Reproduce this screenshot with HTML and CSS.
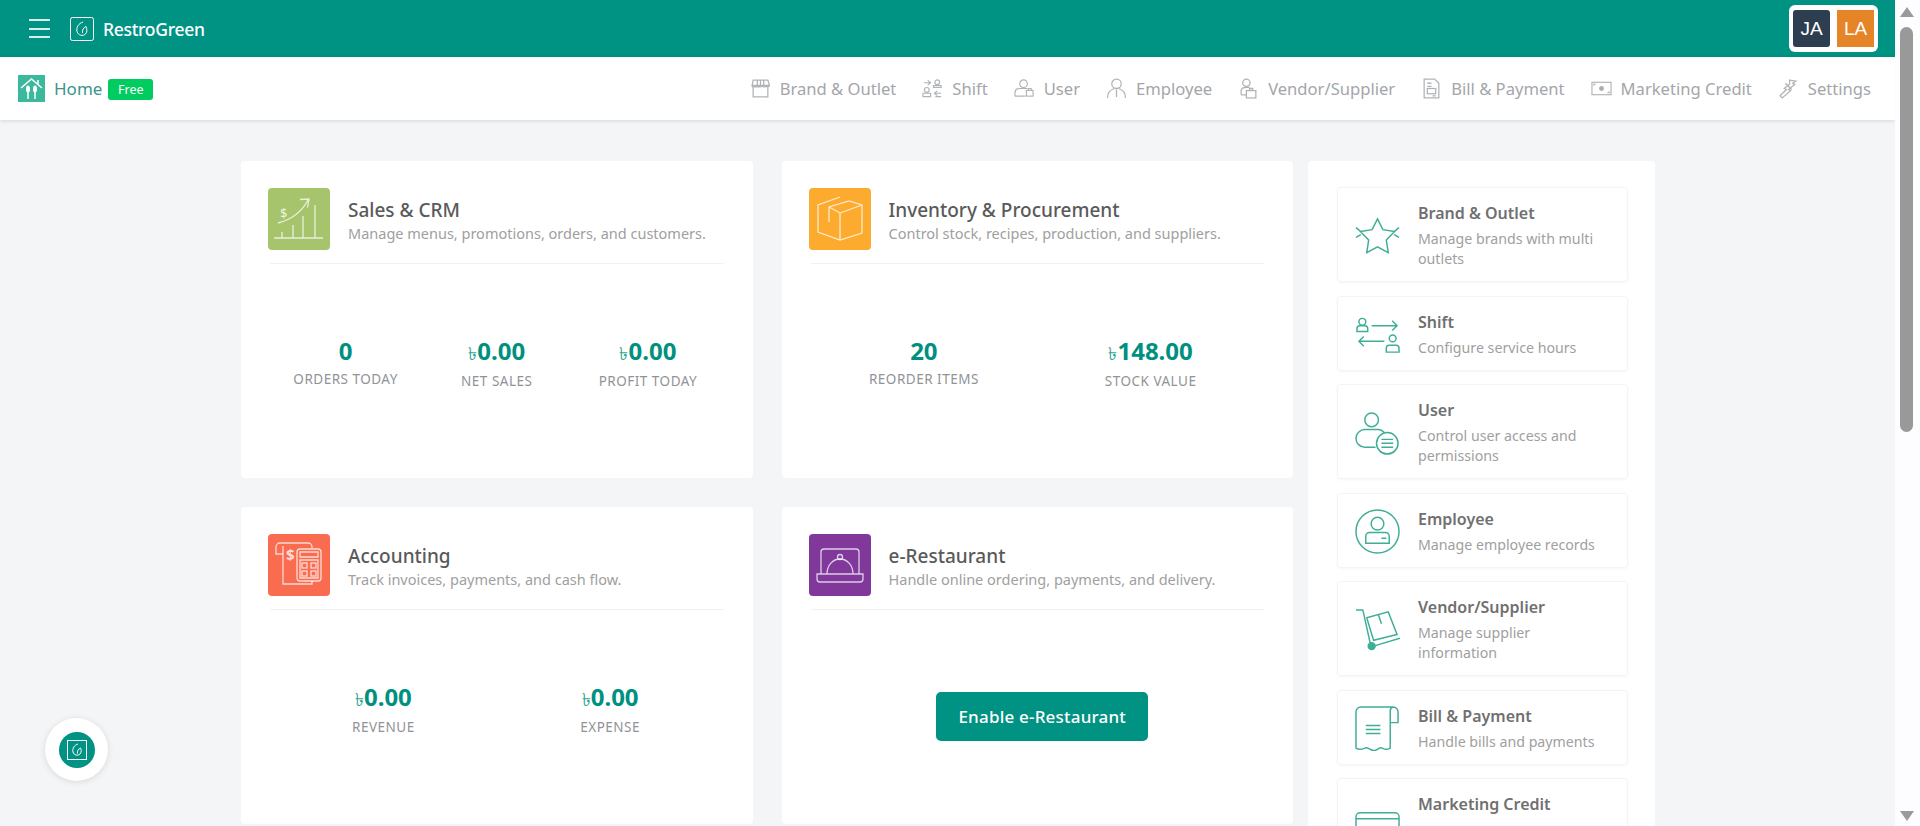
FILE: index.html
```html
<!DOCTYPE html>
<html lang="en">
<head>
    <meta charset="UTF-8">
    <title>RestroGreen</title>
    <link rel="stylesheet" href="styles.css">
</head>
<body>
<div class="app">
    <div class="page">
        <!-- top bar -->
        <header class="topbar">
            <div class="burger"><span></span><span></span><span></span></div>
            <svg class="logo" viewBox="0 0 24 24" fill="none" stroke="#fff"><rect x=".5" y=".5" width="23" height="23" rx="2"/><path d="M13 5C8.500 6.500 6 10.500 7 14.500c1 4 6 5 8.500 2.500 2-2 1.500-5 .5-7.500-2.500 1-4 3.500-3.500 6.500"/></svg>
            <span class="brand">RestroGreen</span>
            <div class="avatars">
                <span class="avatar avatar-dark">JA</span>
                <span class="avatar avatar-orange">LA</span>
            </div>
        </header>

        <!-- second bar -->
        <nav class="subnav">
            <svg class="home-icon" viewBox="0 0 27 27"><rect width="27" height="27" fill="#3cb89c"/><path d="M3 13 13.500 4 24 13M20 5v4" fill="none" stroke="#fff" stroke-width="1.500"/><path d="M10 12v12M17 12v12" stroke="#fff" stroke-width="1.500"/><ellipse cx="10" cy="14" rx="2" ry="3.500" fill="#fff"/><ellipse cx="17" cy="14" rx="2" ry="3.500" fill="#fff"/></svg>
            <span class="home-label">Home</span>
            <span class="badge">Free</span>
            <div class="subnav-links">
                <a class="subnav-link"><svg viewBox="0 0 20 20"><path d="M3 2h14l1.500 5c0 2-3 2-3 0 0 2-4 2-4 0 0 2-3 2-3 0 0 2-3.500 2-3.500 0 0 2-3.500 2-3 0zM3 9v9h14V9M1.500 7h17M7 2v5M10 2v5M13 2v5"/></svg>Brand &amp; Outlet</a>
                <a class="subnav-link"><svg viewBox="0 0 22 20"><circle cx="16" cy="3.500" r="2.500"/><path d="M12 9V7h8v2zM2 4h7M6 1.500 9 4 6 6.500"/><circle cx="5" cy="11.500" r="2.500"/><path d="M1 18.500V15h8v3.500zM13 15h7M16 12.500 13 15l3 2.500M20 18.500h-6"/></svg>Shift</a>
                <a class="subnav-link"><svg viewBox="0 0 22 20"><circle cx="10" cy="5" r="4"/><path d="M1 18v-3c0-3 2-5 5-5h8M1 18h11"/><rect x="13" y="12" width="7" height="6"/><path d="M15 12v-2h3v2"/></svg>User</a>
                <a class="subnav-link"><svg viewBox="0 0 20 20"><circle cx="10" cy="5.500" r="4.500"/><path d="M1.500 19c0-5 3-8 6.500-9M18.500 19c0-5-3-8-6.500-9M10 11v7"/></svg>Employee</a>
                <a class="subnav-link"><svg viewBox="0 0 20 20"><circle cx="8" cy="4.500" r="3.500"/><path d="M3 16v-4c0-2 2-3 5-3h3"/><rect x="8" y="12" width="9" height="7"/><path d="M11 12v-2h3v2M3 16h5"/></svg>Vendor/Supplier</a>
                <a class="subnav-link"><svg viewBox="0 0 18 20"><path d="M2 1h10l4 4v14H2zM5 5h4M5 8h4"/><rect x="5" y="10" width="8" height="5"/><path d="M10 17h3"/></svg>Bill &amp; Payment</a>
                <a class="subnav-link"><svg viewBox="0 0 22 16"><rect x="1" y="1.500" width="20" height="13"/><circle cx="11" cy="8" r="2" fill="#a6a9ad"/><path d="M3 5V3.500h2M19 11v1.500h-2"/></svg>Marketing Credit</a>
                <a class="subnav-link"><svg viewBox="0 0 20 20"><path d="M11 2l6 1-3 2 2 1-6 5 2 1-8 7-2-2 6-6-2-1 5-4z"/><path d="M7 5l6 6"/></svg>Settings</a>
            </div>
        </nav>

        <main class="content">
            <div class="modules">
                <section class="card">
                    <div class="card-head">
                        <span class="card-icon bg-green">
                            <svg viewBox="0 0 62 62"><path d="M10 35c12-3 23-10 30-23M32 11.500l9-.5-1.500 8.500M6 50h49M14 50v-6M25 50V37M35 50V28M47 50V17"/><text x="12" y="30" class="icon-text">$</text></svg>
                        </span>
                        <div class="card-text">
                            <h2>Sales &amp; CRM</h2>
                            <p>Manage menus, promotions, orders, and customers.</p>
                        </div>
                    </div>
                    <div class="stats">
                        <div class="stat"><strong>0</strong><span>ORDERS TODAY</span></div>
                        <div class="stat"><strong><i>৳</i>0.00</strong><span>NET SALES</span></div>
                        <div class="stat"><strong><i>৳</i>0.00</strong><span>PROFIT TODAY</span></div>
                    </div>
                </section>

                <section class="card">
                    <div class="card-head">
                        <span class="card-icon bg-orange">
                            <svg viewBox="0 0 62 62"><path d="M31 9 9 17v27l22 8 22-7V17l-13-4-20 6v15M31 25v27M31 25l22-8M31 25l-11-6"/></svg>
                        </span>
                        <div class="card-text">
                            <h2>Inventory &amp; Procurement</h2>
                            <p>Control stock, recipes, production, and suppliers.</p>
                        </div>
                    </div>
                    <div class="stats">
                        <div class="stat"><strong>20</strong><span>REORDER ITEMS</span></div>
                        <div class="stat"><strong><i>৳</i>148.00</strong><span>STOCK VALUE</span></div>
                    </div>
                </section>

                <section class="card">
                    <div class="card-head">
                        <span class="card-icon bg-red">
                            <svg viewBox="0 0 62 62"><path d="M44 14v-1a4 4 0 0 0-4-4H12a4 4 0 0 0-4 4v7h7v30h29v-3M15 20v-8"/><rect x="29" y="15" width="24" height="32" rx="3"/><path d="M32 23h18v-5H32zM32 44V26h18v18z"/><rect x="34" y="29" width="5" height="5"/><rect x="43" y="29" width="5" height="5"/><rect x="34" y="37" width="5" height="5"/><rect x="43" y="37" width="5" height="5"/><text x="18" y="26" class="icon-text icon-bold">$</text></svg>
                        </span>
                        <div class="card-text">
                            <h2>Accounting</h2>
                            <p>Track invoices, payments, and cash flow.</p>
                        </div>
                    </div>
                    <div class="stats">
                        <div class="stat"><strong><i>৳</i>0.00</strong><span>REVENUE</span></div>
                        <div class="stat"><strong><i>৳</i>0.00</strong><span>EXPENSE</span></div>
                    </div>
                </section>

                <section class="card">
                    <div class="card-head">
                        <span class="card-icon bg-purple">
                            <svg viewBox="0 0 62 62"><path d="M12 40V18a3 3 0 0 1 3-3h32a3 3 0 0 1 3 3v22M8 40v5a3 3 0 0 0 3 3h40a3 3 0 0 0 3-3v-5zM18 40c0-9 6-15 13-15s13 6 13 15"/><circle cx="31" cy="23" r="2.500"/></svg>
                        </span>
                        <div class="card-text">
                            <h2>e-Restaurant</h2>
                            <p>Handle online ordering, payments, and delivery.</p>
                        </div>
                    </div>
                    <div class="card-action">
                        <button class="enable-btn">Enable e-Restaurant</button>
                    </div>
                </section>
            </div>

            <aside class="side-panel">
                <a class="side-item">
                    <svg viewBox="0 0 46 40"><path d="M23 2l5.500 11 12 2-8.500 8.500 2 13-11-6-11 6 2-13L5.500 15l12-2zM1 11l5 4M45 11l-5 4M1 21l5-3M45 21l-5-3"/></svg>
                    <div><h3>Brand &amp; Outlet</h3><p>Manage brands with multi outlets</p></div>
                </a>
                <a class="side-item">
                    <svg viewBox="0 0 46 40"><circle cx="7.500" cy="7" r="3.500"/><path d="M2 17v-3a3 3 0 0 1 3-3h5a3 3 0 0 1 3 3v3zM17 11h26M38 6l5 5-5 5M30 27H4M9 22l-5 5 5 5"/><circle cx="38.500" cy="24" r="3.500"/><path d="M32 38v-4a3 3 0 0 1 3-3h7a3 3 0 0 1 3 3v4z"/></svg>
                    <div><h3>Shift</h3><p>Configure service hours</p></div>
                </a>
                <a class="side-item">
                    <svg viewBox="0 0 46 46"><circle cx="17" cy="9" r="7"/><path d="M21 37H10a9 9 0 0 1 0-18h14c3 0 5 2 6 3"/><circle cx="33" cy="33" r="11"/><path d="M27 29h12M27 33h12M27 37h12"/></svg>
                    <div><h3>User</h3><p>Control user access and permissions</p></div>
                </a>
                <a class="side-item">
                    <svg viewBox="0 0 46 46"><circle cx="23" cy="23" r="22"/><circle cx="23" cy="15" r="6.500"/><path d="M11 35v-7a4 4 0 0 1 4-4h16a4 4 0 0 1 4 4v7zM27 30h5"/></svg>
                    <div><h3>Employee</h3><p>Manage employee records</p></div>
                </a>
                <a class="side-item">
                    <svg viewBox="0 0 46 46"><path d="M1 2h7l8 36M46 31l-27 8"/><circle cx="17" cy="39" r="3.500" fill="#3fae97"/><path d="M12 10l22-6 9 23-24 6zM24 7l3 9"/></svg>
                    <div><h3>Vendor/Supplier</h3><p>Manage supplier information</p></div>
                </a>
                <a class="side-item">
                    <svg viewBox="0 0 46 46"><path d="M1 6a5 5 0 0 1 5-5h33a5 5 0 0 1 5 5v11h-8M39 1a4 4 0 0 0-3 4v38c-3 2-5 2-8 0-3-2-5 3-9 2.500s-6-4-9-2.500c-3 1.500-6 2-9 0V6M11 20h15M11 24h15M11 28h15"/></svg>
                    <div><h3>Bill &amp; Payment</h3><p>Handle bills and payments</p></div>
                </a>
                <a class="side-item side-item-cut">
                    <svg viewBox="0 0 46 46"><rect x="1" y="8" width="44" height="30" rx="4"/><path d="M1 14h44"/></svg>
                    <div><h3>Marketing Credit</h3></div>
                </a>
            </aside>
        </main>
    </div>

    <div class="scrollbar">
        <span class="arrow arrow-up"></span>
        <span class="thumb"></span>
        <span class="arrow arrow-down"></span>
    </div>

    <button class="float-btn">
        <span class="float-inner">
            <svg viewBox="0 0 20 20" fill="none" stroke="#fff"><rect x=".5" y=".5" width="19" height="19"/><path d="M11 4C7.500 5 5 8.500 6 12c1 3.500 5 4 7 2 1.500-1.500 1.500-4 .5-6-2 1-3.500 3-3 5.500"/></svg>
        </span>
    </button>
</div>
</body>
</html>
```
FILE: styles.css
```css
* {
    box-sizing: border-box;
}

html, body {
    height: 100%;
    margin: 0;
    overflow: hidden;
}

body {
    font-family: "Noto Sans", "Open Sans", sans-serif;
    background-color: #f4f5f7;
    color: #555;
}

.app {
    display: flex;
    height: 826px;
}

.page {
    flex: 1;
    min-width: 0;
    overflow: hidden;
}

/* top bar */
.topbar {
    height: 57px;
    background-color: #009282;
    display: flex;
    align-items: center;
    padding: 0 17px 0 29px;
    color: #fff;
}

.burger {
    width: 21px;
    display: flex;
    flex-direction: column;
    gap: 6.5px;
    margin-right: 20px;
}

.burger span {
    height: 2px;
    background-color: #d8f0ec;
}

.logo {
    width: 24px;
    height: 24px;
    margin-right: 9px;
}

.brand {
    font-size: 17.5px;
    font-weight: 500;
    letter-spacing: -0.3px;
}

.avatars {
    margin-left: auto;
    background-color: #fff;
    border-radius: 6px;
    padding: 5px 4px;
    display: flex;
    gap: 7px;
}

.avatar {
    width: 37px;
    height: 37px;
    display: flex;
    align-items: center;
    justify-content: center;
    font-family: "Liberation Sans", sans-serif;
    font-size: 19px;
}

.avatar-dark {
    background-color: #2c3e50;
    border-radius: 3px;
}

.avatar-orange {
    background-color: #e68428;
}

/* second bar */
.subnav {
    height: 63px;
    background-color: #fff;
    box-shadow: 0 1px 4px rgba(0, 0, 0, 0.12);
    display: flex;
    align-items: center;
    padding: 0 24px 0 18px;
    position: relative;
}

.home-icon {
    width: 27px;
    height: 27px;
    margin-right: 9px;
}

.home-label {
    font-size: 17px;
    color: #3d948a;
    margin-right: 5px;
}

.badge {
    width: 45px;
    height: 21px;
    margin: 2px 0 0 1px;
    background-color: #00cc5f;
    color: #fff;
    font-size: 12.5px;
    line-height: 21px;
    text-align: center;
    border-radius: 3px;
}

.subnav-links {
    margin-left: auto;
    display: flex;
    gap: 26px;
}

.subnav-link {
    display: flex;
    align-items: center;
    gap: 9px;
    font-size: 16.6px;
    color: #a3a6aa;
}

.subnav-link svg {
    width: 21px;
    height: 21px;
    fill: none;
    stroke: #b0b3b6;
    stroke-width: 1.2;
}

/* main */
.content {
    display: flex;
    align-items: flex-start;
    padding: 41px 0 0 241px;
    gap: 15px;
}

.modules {
    width: 1052px;
    display: grid;
    grid-template-columns: 511.5px 511.5px;
    column-gap: 29px;
    row-gap: 29px;
}

.card {
    background-color: #fff;
    border-radius: 4px;
    height: 317px;
    padding: 27px 29px 0;
}

.card-head {
    display: flex;
    align-items: center;
    gap: 18px;
    padding-bottom: 13px;
    border-bottom: 1px solid #f1f2f5;
}

.card-icon {
    width: 62px;
    height: 62px;
    margin-left: -2px;
    border-radius: 4px;
    flex-shrink: 0;
}

.card-icon svg {
    display: block;
    fill: none;
    stroke: rgba(255, 255, 255, 0.75);
    stroke-width: 1.3;
}

.icon-text {
    font-size: 13px;
    fill: rgba(255, 255, 255, 0.8);
    stroke: none;
}

.icon-bold {
    font-size: 15px;
    font-weight: 700;
}

.bg-green { background-color: #a5c46b; }
.bg-orange { background-color: #fdab2e; }
.bg-red { background-color: #f96c50; }
.bg-purple { background-color: #80399b; }

.card-text {
    padding-top: 4px;
}

.card h2 {
    margin: 0;
    font-size: 19px;
    font-weight: 500;
    line-height: 24px;
    color: #5a5a5a;
}

.card p {
    margin: 0;
    font-size: 14.5px;
    line-height: 22px;
    color: #a0a0a0;
}

.stats {
    display: flex;
    padding-top: 72px;
}

.stat {
    flex: 1;
    display: flex;
    flex-direction: column;
    align-items: center;
}

.stat strong {
    font-size: 24px;
    line-height: 30px;
    font-weight: 700;
    color: #00907f;
}

.stat strong i {
    font-style: normal;
    font-weight: 400;
    font-size: 18px;
    color: #2fa595;
}

.stat span {
    font-size: 13.5px;
    line-height: 26px;
    letter-spacing: 0.5px;
    color: #909397;
}

.card-action {
    display: flex;
    justify-content: center;
    padding: 82px 0 0 10px;
}

.enable-btn {
    width: 212px;
    height: 49px;
    border: none;
    border-radius: 5px;
    background-color: #009282;
    color: #fff;
    font-family: inherit;
    font-size: 17px;
    font-weight: 500;
    letter-spacing: 0.2px;
}

/* right panel */
.side-panel {
    width: 347px;
    background-color: #fff;
    border-radius: 4px;
    padding: 26px 27px 30px 29px;
    display: flex;
    flex-direction: column;
    gap: 13.5px;
}

.side-item {
    display: flex;
    align-items: center;
    gap: 18px;
    padding: 15px 18px 12px 17px;
    border: 1px solid #f3f4f6;
    border-radius: 4px;
    box-shadow: 0 1px 3px rgba(0, 0, 0, 0.04);
}

.side-item-cut {
    height: 95px;
}

.side-item-cut div {
    align-self: flex-start;
}

.side-item svg {
    width: 45px;
    height: 45px;
    flex-shrink: 0;
    fill: none;
    stroke: #3fae97;
    stroke-width: 1.5;
}

.side-item h3 {
    margin: 0 0 6px;
    font-size: 16px;
    font-weight: 600;
    line-height: 20px;
    color: #707070;
}

.side-item p {
    margin: 0;
    font-size: 14.2px;
    line-height: 20px;
    color: #a0a0a0;
}

/* scrollbar */
.scrollbar {
    width: 25px;
    background-color: #fdfdff;
    display: flex;
    flex-direction: column;
    align-items: center;
    padding: 7px 2px 5px 0;
}

.arrow {
    width: 0;
    height: 0;
    border-left: 7.5px solid transparent;
    border-right: 7.5px solid transparent;
}

.arrow-up {
    border-bottom: 10px solid #9a9a9a;
}

.arrow-down {
    border-top: 10px solid #9a9a9a;
    margin-top: auto;
}

.thumb {
    width: 13px;
    height: 405px;
    margin-top: 10px;
    background-color: #999;
    border-radius: 7px;
}

/* floating button */
.float-btn {
    position: absolute;
    left: 45px;
    top: 718px;
    width: 63px;
    height: 63px;
    border: none;
    border-radius: 50%;
    background-color: #fff;
    box-shadow: 0 1px 6px rgba(0, 0, 0, 0.12);
    display: flex;
    align-items: center;
    justify-content: center;
    padding: 0;
}

.float-inner {
    width: 36px;
    height: 36px;
    border-radius: 50%;
    background-color: #009282;
    display: flex;
    align-items: center;
    justify-content: center;
}

.float-inner svg {
    width: 20px;
    height: 20px;
}
```
